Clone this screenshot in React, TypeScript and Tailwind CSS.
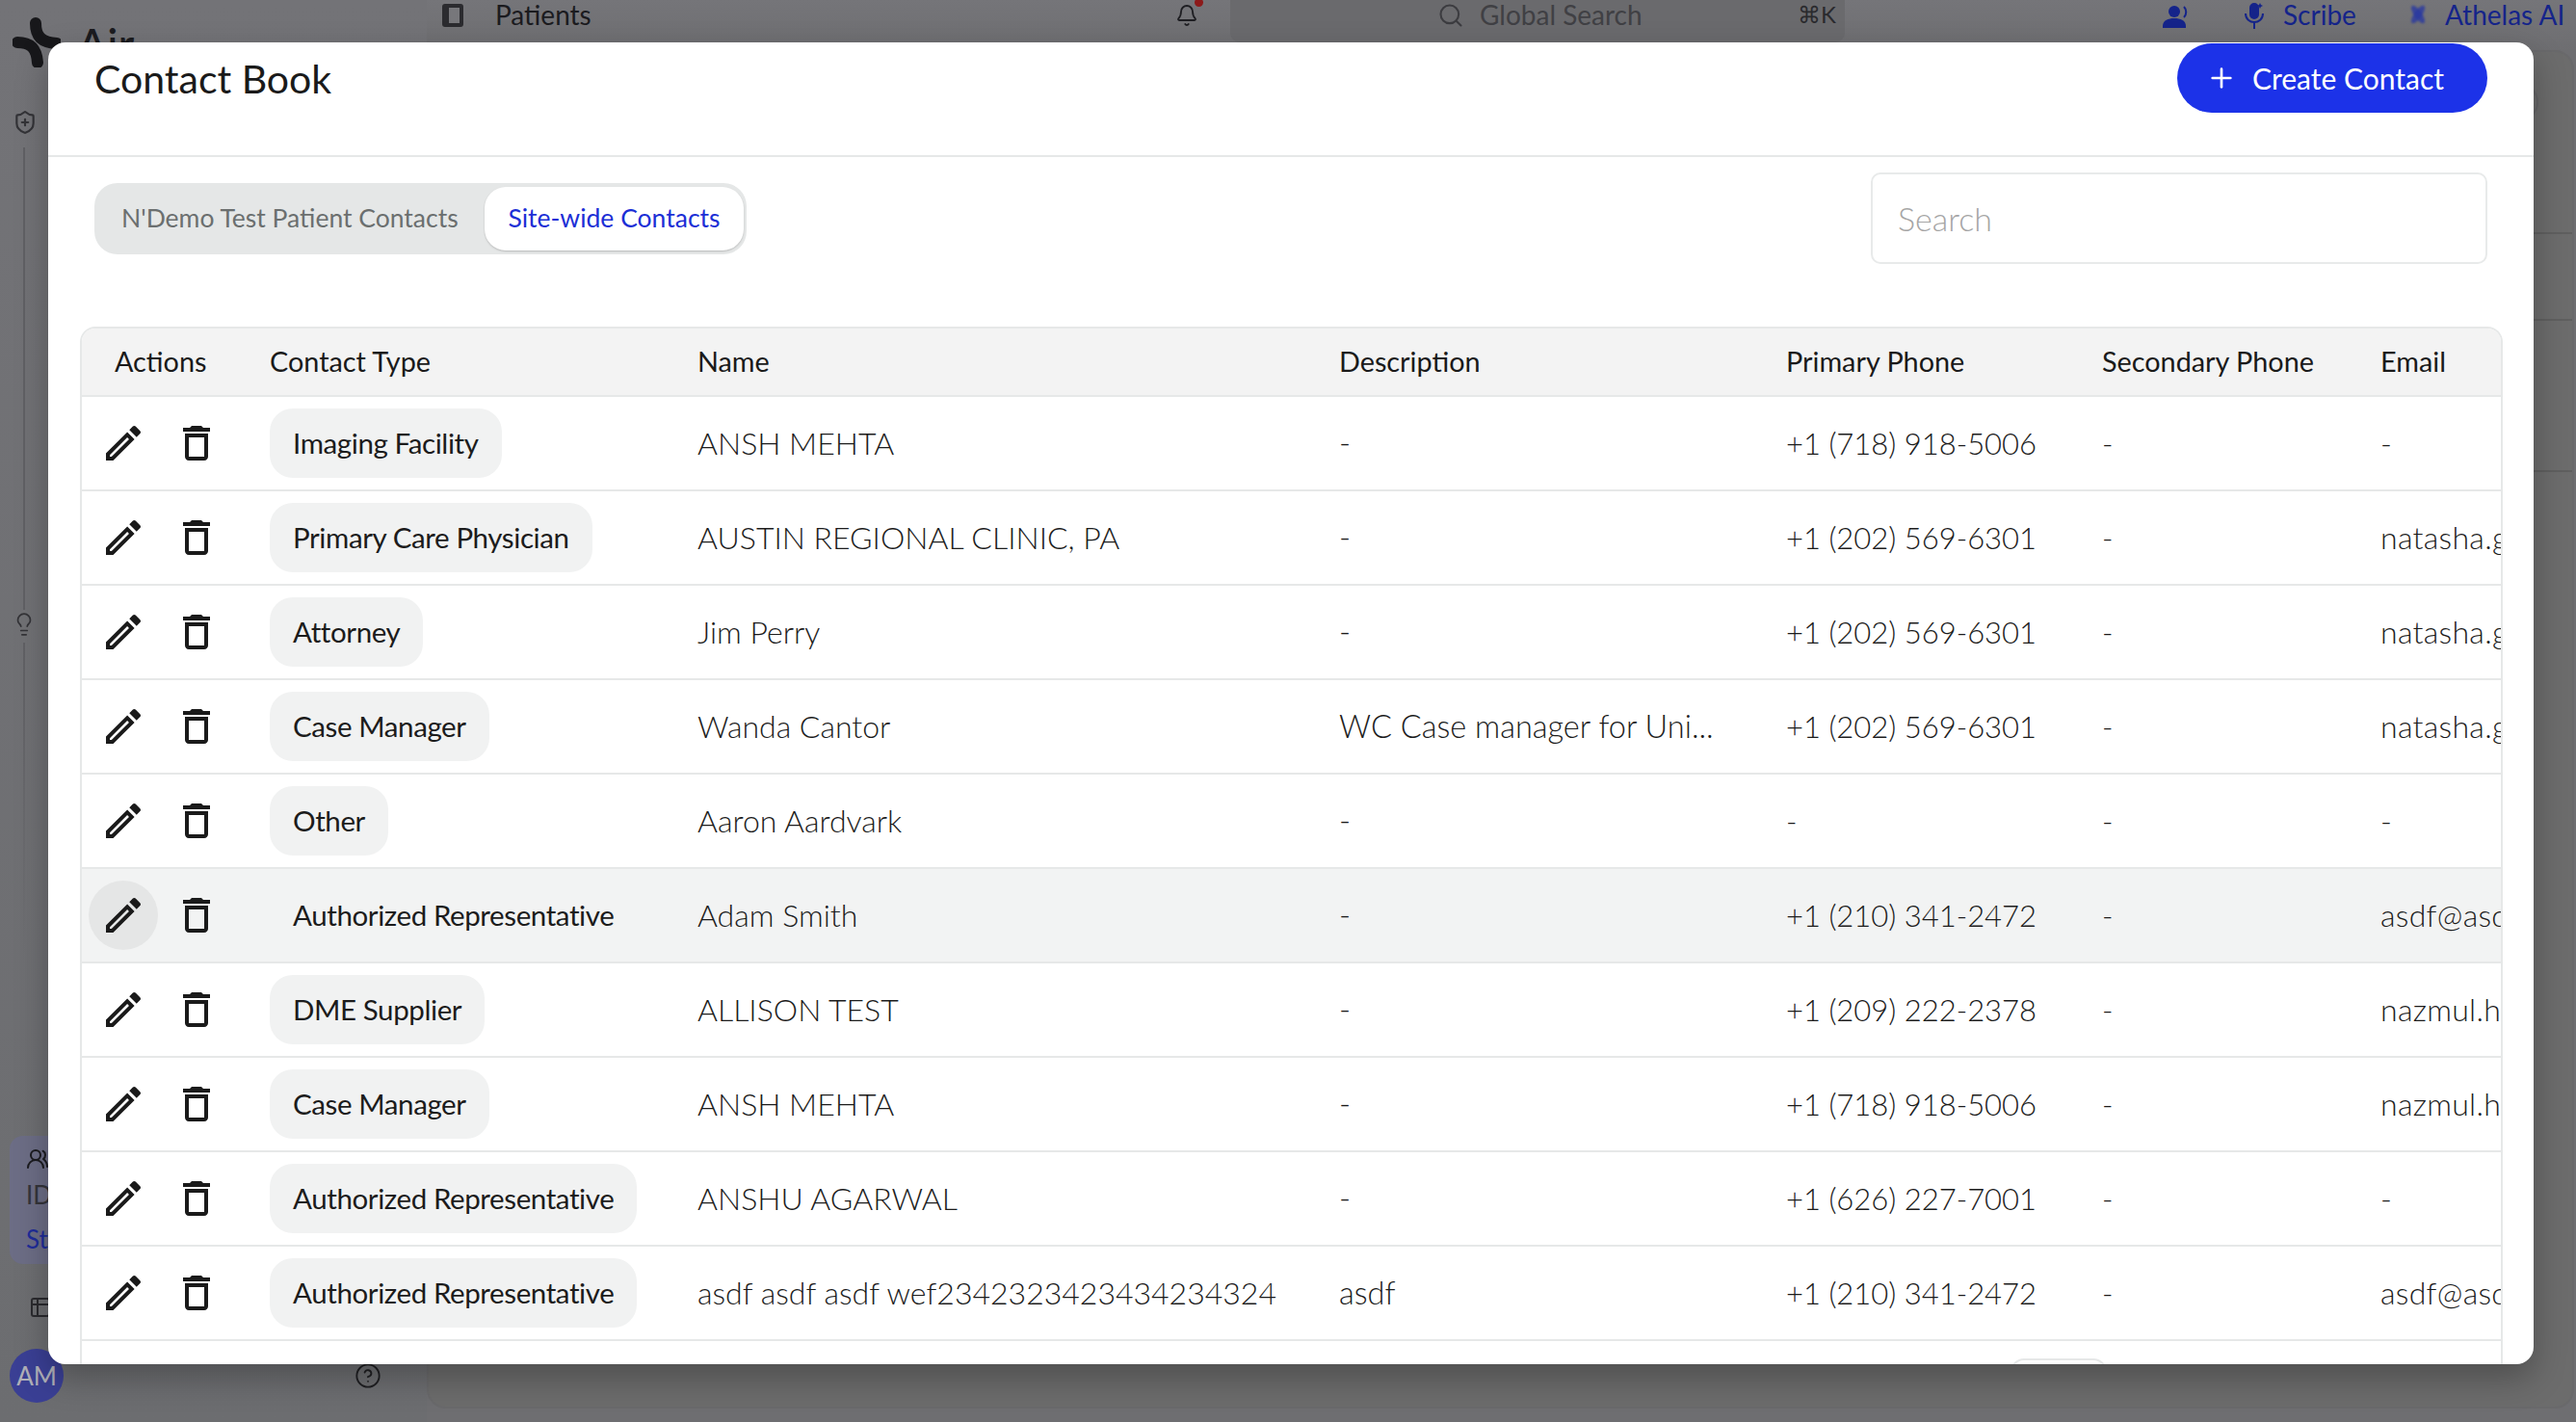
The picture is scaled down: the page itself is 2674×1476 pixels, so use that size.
import { Bell, CircleHelp, Lightbulb, Plus, Search, ShieldPlus, Table2, UsersRound } from 'lucide-react';

type Contact = {
  type: string;
  name: string;
  description: string;
  phone: string;
  email: string;
};

const contacts: Contact[] = [
  { type: 'Imaging Facility', name: 'ANSH MEHTA', description: '-', phone: '+1 (718) 918-5006', email: '-' },
  { type: 'Primary Care Physician', name: 'AUSTIN REGIONAL CLINIC, PA', description: '-', phone: '+1 (202) 569-6301', email: 'natasha.gonzalez@example.com' },
  { type: 'Attorney', name: 'Jim Perry', description: '-', phone: '+1 (202) 569-6301', email: 'natasha.gonzalez@example.com' },
  { type: 'Case Manager', name: 'Wanda Cantor', description: 'WC Case manager for Uni...', phone: '+1 (202) 569-6301', email: 'natasha.gonzalez@example.com' },
  { type: 'Other', name: 'Aaron Aardvark', description: '-', phone: '-', email: '-' },
  { type: 'Authorized Representative', name: 'Adam Smith', description: '-', phone: '+1 (210) 341-2472', email: 'asdf@asdf.com' },
  { type: 'DME Supplier', name: 'ALLISON TEST', description: '-', phone: '+1 (209) 222-2378', email: 'nazmul.hasan@example.com' },
  { type: 'Case Manager', name: 'ANSH MEHTA', description: '-', phone: '+1 (718) 918-5006', email: 'nazmul.hasan@example.com' },
  { type: 'Authorized Representative', name: 'ANSHU AGARWAL', description: '-', phone: '+1 (626) 227-7001', email: '-' },
  { type: 'Authorized Representative', name: 'asdf asdf asdf wef2342323423434234324', description: 'asdf', phone: '+1 (210) 341-2472', email: 'asdf@asdf.com' },
];

const columns = 'grid grid-cols-[195px_444px_666px_464px_328px_289px_1fr]';

function EditIcon() {
  return (
    <svg viewBox="0 0 24 24" className="w-12 h-12 fill-[#1a1a1a]">
      <path d="M3 17.25V21h3.75L17.81 9.94l-3.75-3.75L3 17.25zM5.92 19H5v-.92l9.06-9.06.92.92L5.92 19zM20.71 5.63l-2.34-2.34c-.2-.2-.45-.29-.71-.29s-.51.1-.7.29l-1.83 1.83 3.75 3.75 1.83-1.83c.39-.39.39-1.02 0-1.41z" />
    </svg>
  );
}

function TrashIcon() {
  return (
    <svg viewBox="0 0 24 24" className="w-12 h-12 fill-[#1a1a1a]">
      <path d="M6 19c0 1.1.9 2 2 2h8c1.1 0 2-.9 2-2V7H6v12zM8 9h8v10H8V9zm7.5-5l-1-1h-5l-1 1H5v2h14V4h-3.5z" />
    </svg>
  );
}

function ContactRow({ contact, hovered }: { contact: Contact; hovered: boolean }) {
  return (
    <div className={`${columns} h-[98px] items-center border-b-2 border-[#e6e8e8] ${hovered ? 'bg-[#f2f3f3]' : ''}`}>
      <div className="flex items-center pl-[7px] gap-1">
        <button className={`w-[72px] h-[72px] rounded-full flex items-center justify-center ${hovered ? 'bg-[#e5e6e6]' : ''}`}>
          <EditIcon />
        </button>
        <button className="w-[72px] h-[72px] rounded-full flex items-center justify-center">
          <TrashIcon />
        </button>
      </div>
      <div>
        <span className={`inline-flex items-center h-[72px] px-6 rounded-[24px] text-[29.5px] tracking-[-0.4px] text-[#1c1c1c] ${hovered ? '' : 'bg-[#f1f2f2]'}`}>
          {contact.type}
        </span>
      </div>
      <div className="text-[32px] font-light text-[#1c1c1c] whitespace-nowrap">{contact.name}</div>
      <div className="text-[32.5px] font-light text-[#1c1c1c] whitespace-nowrap">{contact.description}</div>
      <div className="text-[31px] font-light text-[#1c1c1c] whitespace-nowrap">{contact.phone}</div>
      <div className="text-[31px] font-light text-[#1c1c1c]">-</div>
      <div className="text-[32px] font-light tracking-[0.3px] text-[#1c1c1c] whitespace-nowrap overflow-hidden">{contact.email}</div>
    </div>
  );
}

function BackgroundPage() {
  return (
    <div className="flex w-full h-[1476px] bg-[#6e6e71] text-[#1b1b1f]">
      {/* sidebar */}
      <aside className="w-[443px] shrink-0 flex flex-col relative bg-gradient-to-b from-[#737377] to-[#6c6d70]">
        <div className="flex items-start pl-[13px] pt-[18px] gap-[17px] h-[113px]">
          <svg viewBox="0 0 50 52" className="w-[50px] h-[52px] fill-none stroke-[#17171a] stroke-[12] [stroke-linecap:round]">
            <path d="M24 6c0 14 6 20 22 21" />
            <path d="M5 26c14 0 20 6 21 21" />
          </svg>
          <span className="text-[46px] font-medium leading-[56px]">Air</span>
        </div>
        <ShieldPlus className="w-[26px] h-[28px] ml-[13px] text-[#333337]" strokeWidth={2} />
        <div className="w-[2px] h-[480px] ml-[24px] mt-[12px] bg-[#606064]" />
        <Lightbulb className="w-[26px] h-[26px] ml-[12px] mt-[2px] text-[#333337]" strokeWidth={1.6} />
        <div className="w-[2px] h-[330px] ml-[24px] mt-[6px] bg-gradient-to-b from-[#606064] to-transparent" />
        <div className="absolute top-[1179px] left-[10px] w-[400px] h-[133px] rounded-[14px] bg-[#6c6d85] pl-[17px] pt-[12px]">
          <UsersRound className="w-6 h-6 text-[#1b1b1f]" />
          <p className="text-[26px] leading-[30px] mt-[10px] text-[#34343a]">ID</p>
          <p className="text-[26px] leading-[30px] mt-[16px] text-[#1f2c99]">St</p>
        </div>
        <div className="absolute top-[1345px] left-[30px]">
          <Table2 className="w-6 h-6 text-[#2a2a2e]" />
        </div>
        <div className="absolute top-[1400px] left-[10px] w-[56px] h-[56px] rounded-full bg-[#3a3f94] flex items-center justify-center text-[26px] text-[#b0b0b8]">
          AM
        </div>
        <CircleHelp className="absolute top-[1414px] left-[368px] w-7 h-7 text-[#1f1f22]" strokeWidth={1.6} />
      </aside>

      <div className="flex-1 flex flex-col min-w-0">
        {/* top bar */}
        <header className="h-[52px] flex items-start pt-[1px] bg-gradient-to-b from-[#757579] to-[#6e6e71]">
          <svg viewBox="0 0 24 24" className="w-6 h-6 ml-[15px] mt-[3px]">
            <rect x="1" y="0" width="22" height="24" rx="3" fill="#2b2b2f" />
            <rect x="8" y="4" width="11" height="16" fill="#77777b" />
          </svg>
          <span className="ml-[32px] text-[28px] leading-[28px] w-[100px] whitespace-nowrap">Patients</span>
          <div className="relative ml-[606px] w-[24px] mt-[3px]">
            <Bell className="w-6 h-6 text-[#1e1e22]" strokeWidth={1.8} />
            <span className="absolute -top-[6px] left-[20px] w-[9px] h-[9px] rounded-full bg-[#8c1a1a]" />
          </div>
          <div className="ml-[33px] -mt-[1px] w-[638px] h-[44px] rounded-b-[10px] bg-[#6a6a6d] flex items-start pt-[2px]">
            <Search className="ml-[215px] w-7 h-7 text-[#3c3c40]" strokeWidth={1.8} />
            <span className="ml-[16px] text-[28px] leading-[26px] text-[#404044] w-[170px] whitespace-nowrap">Global Search</span>
            <span className="ml-[160px] text-[24px] leading-[26px] text-[#2a2a2e] whitespace-nowrap">⌘K</span>
          </div>
          <svg viewBox="0 0 30 24" className="ml-[330px] w-[30px] h-6 mt-[4px] fill-[#15248a]">
            <circle cx="12" cy="7" r="6" />
            <path d="M0 22c0-6 6-8 12-8s12 2 12 8v2H0z" />
            <path d="M22 2c3 3 3 8 0 11" fill="none" stroke="#15248a" strokeWidth="2" />
          </svg>
          <svg viewBox="0 0 22 28" className="ml-[54px] mt-[1px] w-[22px] h-[28px] fill-none stroke-[#15248a] stroke-2">
            <rect x="7" y="2" width="8" height="15" rx="4" fill="#15248a" />
            <path d="M2 12c0 12 18 12 18 0M11 22v6" />
            <path d="M17 1l1 2 2 1-2 1-1 2-1-2-2-1 2-1z" fill="#15248a" stroke="none" />
          </svg>
          <span className="ml-[19px] text-[28px] leading-[28px] text-[#15248a] w-[76px] whitespace-nowrap">Scribe</span>
          <svg viewBox="0 0 24 24" className="ml-[52px] w-6 h-6 mt-[2px] fill-[#2a3aa0] blur-[1px]">
            <ellipse cx="12" cy="12" rx="4" ry="11" transform="rotate(35 12 12)" opacity="0.8" />
            <ellipse cx="12" cy="12" rx="4" ry="11" transform="rotate(-35 12 12)" opacity="0.8" />
          </svg>
          <span className="ml-[16px] text-[28px] leading-[28px] text-[#15248a] whitespace-nowrap">Athelas AI</span>
        </header>

        {/* main panel, almost fully hidden by the dialog */}
        <main className="w-[2229px] h-[1410px] rounded-[20px] border-2 border-[#69696b] bg-[#6c6c6c] flex flex-col">
          <div className="h-[189px] border-b-2 border-[#5f5f5f] flex justify-end pr-[35px] pt-[32px]">
            <div className="w-10 h-10 rounded-full border-2 border-[#646466]" />
          </div>
          <div className="h-[90px] border-b-2 border-[#5f5f5f]" />
          <div className="h-[157px] border-b-2 border-[#5f5f5f]" />
        </main>
      </div>
    </div>
  );
}

export default function App() {
  return (
    <div className="relative w-full h-[1476px] overflow-hidden font-[Lato,sans-serif]">
      <BackgroundPage />

      {/* dialog */}
      <div className="absolute left-[50px] top-[44px] w-[2580px] h-[1372px] rounded-[18px] bg-white overflow-hidden flex flex-col shadow-[0_14px_34px_rgba(0,0,0,0.28)]">
        <div className="h-[119px] shrink-0 border-b-2 border-[#e6e8e8] flex items-start justify-between pl-[48px] pr-[48px]">
          <h2 className="pt-[14px] text-[41px] leading-[48px] text-[#1a1a1a]">Contact Book</h2>
          <button className="mt-[1px] w-[322px] h-[72px] rounded-[36px] bg-[#1c32e8] flex items-center pl-[30px] gap-[16px] text-white text-[30px] whitespace-nowrap">
            <Plus className="w-8 h-8" strokeWidth={2} />
            Create Contact
          </button>
        </div>

        <div className="h-[176px] shrink-0 flex items-start justify-between pl-[48px] pr-[48px] pt-[16px]">
          <div className="mt-[11px] h-[74px] rounded-[24px] bg-[#e5e7e7] flex items-center pl-[28px] pr-[3px]">
            <span className="w-[377px] text-[26.5px] text-[#6b6f6f] whitespace-nowrap">N'Demo Test Patient Contacts</span>
            <span className="h-[66px] w-[269px] rounded-[22px] bg-white shadow-[0_1px_2px_rgba(0,0,0,0.2)] flex items-center justify-center text-[26.5px] text-[#1c2fd6] whitespace-nowrap">
              Site-wide Contacts
            </span>
          </div>
          <input
            placeholder="Search"
            className="w-[640px] h-[95px] rounded-[10px] border-2 border-[#e8eaea] px-[26px] text-[34px] font-light placeholder:text-[#a5a5a5]"
          />
        </div>

        <div className="ml-[33px] mr-[32px] flex-1 min-h-0 rounded-t-[16px] border-2 border-b-0 border-[#e6e8e8] overflow-hidden">
          <div className={`${columns} h-[71px] items-center border-b-2 border-[#e6e8e8] bg-[#f3f3f3] text-[28.8px] text-[#1a1a1a]`}>
            <div className="pl-[34px]">Actions</div>
            <div>Contact Type</div>
            <div>Name</div>
            <div>Description</div>
            <div>Primary Phone</div>
            <div className="whitespace-nowrap">Secondary Phone</div>
            <div>Email</div>
          </div>
          {contacts.map((contact, i) => (
            <ContactRow key={i} contact={contact} hovered={i === 5} />
          ))}
          <div className="pl-[2002px] pt-[18px]">
            <div className="w-[100px] h-[40px] rounded-[14px] border-2 border-[#e6e8e8]" />
          </div>
        </div>
      </div>
    </div>
  );
}
